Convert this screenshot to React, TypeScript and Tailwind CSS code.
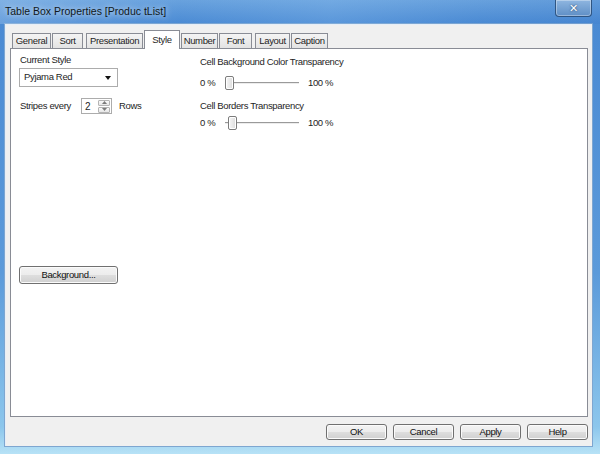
import React from "react";

function WinButton({ label, className = "" }: { label: string; className?: string }) {
  return (
    <div
      className={
        "flex items-center justify-center rounded-[3px] border border-[#707070] bg-[linear-gradient(#f3f3f3_0%,#ececec_50%,#dedede_50%,#d0d0d0_100%)] shadow-[inset_0_0_0_1px_#fbfbfb] text-[#111] " +
        className
      }
    >
      {label}
    </div>
  );
}

function Tab({ label, selected = false, className = "" }: { label: string; selected?: boolean; className?: string }) {
  if (selected) {
    return (
      <div
        className={
          "relative z-10 -mb-[1px] flex h-[19px] items-start justify-center border border-b-0 border-[#898c95] bg-white pt-[2px] " +
          className
        }
      >
        {label}
      </div>
    );
  }
  return (
    <div
      className={
        "flex h-[15px] items-center justify-center border border-b-0 border-[#898c95] bg-[linear-gradient(#f4f4f4,#e3e3e3)] pt-[1px] " +
        className
      }
    >
      {label}
    </div>
  );
}

function Slider({ thumbLeft }: { thumbLeft: string }) {
  return (
    <div className="relative h-[16px] w-[80px]">
      <div className="absolute left-[2px] right-[4px] top-[7px] h-[2px] border-t border-[#9a9a9a] bg-[#ececec]" />
      <div
        className={
          "absolute top-[1px] h-[14px] w-[9px] rounded-[2px] border border-[#7c7c7c] bg-[linear-gradient(90deg,#f6f6f6,#dcdcdc)] shadow-[inset_0_0_0_1px_#ffffff] " +
          thumbLeft
        }
      />
    </div>
  );
}

export default function App() {
  return (
    <div className="flex h-[454px] w-[600px] flex-col overflow-hidden bg-[linear-gradient(180deg,#6aa3de_0%,#4a8ad3_5%,#5b9ada_60%,#8cc6ec_94%,#b7e2f6_100%)] font-['Liberation_Sans',Arial,sans-serif] text-[9.5px] tracking-[-0.35px] text-[#1e1e1e]">
      {/* Title bar */}
      <div className="relative flex h-[24px] shrink-0 items-center pl-[5px] bg-[linear-gradient(90deg,rgba(170,205,240,0.35)_0%,rgba(90,150,220,0.1)_30%,rgba(140,190,240,0.25)_55%,rgba(80,140,215,0.1)_80%,rgba(60,120,200,0.2)_100%)]">
        <span className="text-[10.5px] tracking-normal text-[#101820] [text-shadow:0_0_6px_rgba(255,255,255,0.9)]">
          Table Box Properties [Produc tList]
        </span>
        <div className="absolute right-[8px] top-0 flex h-[17px] w-[37px] items-center justify-center rounded-b-[4px] border border-t-0 border-[#2f5582] bg-[linear-gradient(#8fb6e0,#5f8fc6)] shadow-[inset_0_0_0_1px_rgba(255,255,255,0.35)]">
          <span className="font-['DejaVu_Sans',sans-serif] text-[11px] font-bold leading-none text-white [text-shadow:0_0_2px_#1b3558]">
            ✕
          </span>
        </div>
      </div>

      {/* Frame body */}
      <div className="flex flex-1 flex-col pb-[8px] pl-[5px] pr-[8px]">
        <div className="flex flex-1 flex-col border-l border-t border-[#e6eef7] bg-[#f0f0f0] px-[4px] pt-[5px] shadow-[0_0_0_1px_#7ea6d0]">
          {/* Tabs */}
          <div className="flex h-[18px] items-end">
            <Tab label="General" className="ml-[2px] w-[39px]" />
            <Tab label="Sort" className="ml-[1px] w-[31px]" />
            <Tab label="Presentation" className="ml-[3px] w-[57px]" />
            <Tab label="Style" selected className="ml-[1px] w-[36px]" />
            <Tab label="Number" className="ml-[1px] w-[37px]" />
            <Tab label="Font" className="ml-[1px] w-[33px]" />
            <Tab label="Layout" className="ml-[3px] w-[35px]" />
            <Tab label="Caption" className="ml-[1px] w-[37px]" />
          </div>

          {/* Panel */}
          <div className="flex h-[369px] border border-[#898c95] bg-white pl-[8px]">
            {/* Left column */}
            <div className="flex w-[181px] flex-col pt-[5px]">
              <div className="h-[12px] pl-[1px] leading-[12px]">Current Style</div>
              <div className="mt-[2px] flex h-[19px] w-[99px] items-center justify-between border border-[#acacac] bg-white pl-[4px] pr-[6px]">
                <span>Pyjama Red</span>
                <svg width="6" height="4" viewBox="0 0 6 4">
                  <polygon points="0,0 6,0 3,4" fill="#111" />
                </svg>
              </div>
              <div className="mt-[11px] flex h-[16px] items-center">
                <span className="w-[62px] pl-[1px]">Stripes every</span>
                <div className="flex h-[16px] w-[31px] items-center justify-between border border-[#acacac] bg-white pl-[3px] pr-[1px]">
                  <span className="text-[10px]">2</span>
                  <div className="flex flex-col gap-[1px]">
                    <div className="flex h-[6px] w-[12px] items-center justify-center rounded-[1px] border border-[#b4b4b4] bg-[linear-gradient(#fafafa,#e6e6e6)]">
                      <svg width="5" height="3" viewBox="0 0 5 3">
                        <polygon points="2.5,0 5,3 0,3" fill="#7a7a7a" />
                      </svg>
                    </div>
                    <div className="flex h-[6px] w-[12px] items-center justify-center rounded-[1px] border border-[#b4b4b4] bg-[linear-gradient(#fafafa,#e6e6e6)]">
                      <svg width="5" height="3" viewBox="0 0 5 3">
                        <polygon points="0,0 5,0 2.5,3" fill="#7a7a7a" />
                      </svg>
                    </div>
                  </div>
                </div>
                <span className="ml-[7px]">Rows</span>
              </div>
              <WinButton label="Background..." className="mt-[152px] h-[18px] w-[99px]" />
            </div>

            {/* Right column */}
            <div className="flex flex-col pt-[7px]">
              <div className="h-[12px] leading-[12px]">Cell Background Color Transparency</div>
              <div className="mt-[7px] flex h-[16px] items-center">
                <span className="w-[23px]">0 %</span>
                <Slider thumbLeft="left-[2px]" />
                <span className="ml-[5px]">100 %</span>
              </div>
              <div className="mt-[9px] h-[12px] leading-[12px]">Cell Borders Transparency</div>
              <div className="mt-[3px] flex h-[16px] items-center">
                <span className="w-[23px]">0 %</span>
                <Slider thumbLeft="left-[5px]" />
                <span className="ml-[5px]">100 %</span>
              </div>
            </div>
          </div>

          {/* Bottom buttons */}
          <div className="mt-[7px] flex justify-end gap-[6px]">
            <WinButton label="OK" className="h-[16px] w-[61px]" />
            <WinButton label="Cancel" className="h-[16px] w-[61px]" />
            <WinButton label="Apply" className="h-[16px] w-[61px]" />
            <WinButton label="Help" className="h-[16px] w-[61px]" />
          </div>
        </div>
      </div>
    </div>
  );
}
